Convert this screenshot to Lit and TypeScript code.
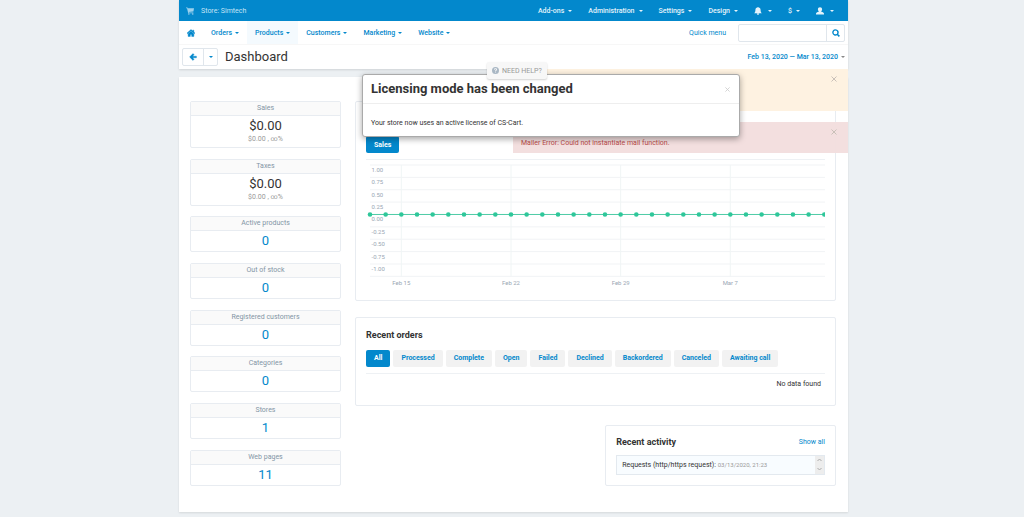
import { LitElement, html, css, svg } from "lit";
import { customElement } from "lit/decorators.js";
import { classMap } from "lit/directives/class-map.js";

interface Stat {
  title: string;
  value: string;
  note?: string;
}

const STATS: Stat[] = [
  { title: "Sales", value: "$0.00", note: "$0.00 , ∞%" },
  { title: "Taxes", value: "$0.00", note: "$0.00 , ∞%" },
  { title: "Active products", value: "0" },
  { title: "Out of stock", value: "0" },
  { title: "Registered customers", value: "0" },
  { title: "Categories", value: "0" },
  { title: "Stores", value: "1" },
  { title: "Web pages", value: "11" },
];

const ORDER_TABS = ["All", "Processed", "Complete", "Open", "Failed", "Declined", "Backordered", "Canceled", "Awaiting call"];
const AXIS = ["1.00", "0.75", "0.50", "0.25", "0.00", "-0.25", "-0.50", "-0.75", "-1.00"];
const WEEKS = ["Feb 15", "Feb 22", "Feb 29", "Mar 7"];

const icons = {
  cart: svg`<path d="M0 .8h2.600l.5 1.300H14l-1 5.700-8.300.9.2.9h8v1.200H3.800L1.800 2H0z"/><circle cx="5" cy="12.400" r="1.300"/><circle cx="11.800" cy="12.400" r="1.300"/>`,
  home: svg`<path d="M7 1 0 7.200l.9 1L7 3l6.100 5.200.9-1-2-1.800V2h-2v1.600zM7 4 2 8.200V13h3.800V9.500h2.400V13H12V8.200z" stroke="currentColor" stroke-width=".7"/>`,
  bell: svg`<path d="M7 0c.6 0 1 .4 1 .9 2.300.5 3.500 2 3.500 4.300 0 3 .8 4.300 2.300 5.800H.2C1.700 9.500 2.500 8.200 2.500 5.200 2.500 2.900 3.700 1.400 6 .9 6 .4 6.400 0 7 0zM5 11.500h4C9 12.800 8.200 13.700 7 13.700s-2-.9-2-2.200z"/>`,
  user: svg`<path d="M7 .3c2.300 0 3.700 1.600 3.700 3.800 0 1.500-.6 2.800-1.500 3.500v.6c2.600.7 4.800 1.500 4.800 3.400V13.300H0v-1.700c0-1.900 2.200-2.700 4.800-3.400v-.6C3.900 6.900 3.300 5.600 3.300 4.100 3.300 1.900 4.700.3 7 .3z"/>`,
  back: svg`<path d="M7 1 1 7l6 6 1.900-1.900L6.300 8.500H13v-3H6.300l2.600-2.600z" stroke="currentColor" stroke-width=".6"/>`,
  search: svg`<path fill-rule="evenodd" d="M6 .3a5.700 5.700 0 1 0 3 10.600l3 3 1.900-1.900-3-3A5.700 5.700 0 0 0 6 .3zM6 2.700a3.300 3.300 0 1 1 0 6.600 3.300 3.300 0 0 1 0-6.600z"/>`,
  help: svg`<path fill-rule="evenodd" d="M7 0a7 7 0 1 0 0 14A7 7 0 0 0 7 0zM4 5.200C4.100 3.500 5.300 2.500 7.100 2.500c1.700 0 3 1 3 2.500 0 1.200-.7 1.800-1.500 2.300-.5.300-.7.500-.7 1.100H6.200c0-1.500.5-2 1.300-2.500.5-.3.700-.5.700-.9s-.4-.8-1.100-.8-1.100.4-1.200 1.100zM6.100 9.300h1.900v1.900H6.100z"/>`,
};

const icon = (name: keyof typeof icons) =>
  html`<svg class="icon" viewBox="0 0 14 14" aria-hidden="true">${icons[name]}</svg>`;

@customElement("app-root")
export class AppRoot extends LitElement {
  static styles = css`
    :host {
      display: block;
      box-sizing: border-box;
      min-height: 100vh;
      padding: 0 0 6px 3px;
      background: #ecf0f3;
      color: #333;
      font: 7px/10px Roboto, "Liberation Sans", sans-serif;
    }
    *, *::before, *::after { box-sizing: border-box; }
    h1, h2, h3, p, dl, dd, dt, ul { margin: 0; padding: 0; list-style: none; }
    a { color: #0388cc; text-decoration: none; }
    button, input { font: inherit; color: inherit; margin: 0; padding: 0; border: 0; background: none; }
    .icon { width: 8px; height: 8px; fill: currentColor; display: block; flex: none; }
    .caret { border: 2px solid transparent; border-top-color: currentColor; border-bottom: 0; flex: none; }
    .frame { position: relative; max-width: 669px; margin: 0 auto; }

    .header { background: #fff; box-shadow: 0 1px 2px rgba(0, 0, 0, 0.12); }
    .top { display: flex; align-items: center; height: 21px; background: #0388cc; padding: 0 6px 0 7px; }
    .store { display: flex; align-items: center; gap: 7px; color: #c4e4f6; margin-right: auto; }
    .store .icon { opacity: 0.8; }
    .menu { display: flex; height: 100%; }
    .menu a { display: flex; align-items: center; gap: 4px; padding: 0 8px; height: 100%; font-weight: 500; }
    .menu .active { background: #f4fafe; }
    .top .menu a { color: #e4f3fb; }
    .top .menu .glyph { gap: 6px; }
    .nav { display: flex; align-items: center; height: 24px; padding-right: 3px; border-bottom: 1px solid #f7f7f7; }
    .nav .menu { margin-right: auto; }
    .nav .menu a { gap: 3px; }
    .search { display: flex; width: 107px; height: 18px; margin-left: 12px; border: 1px solid #e0e6ec; border-radius: 2px; }
    .search input { flex: 1; min-width: 0; padding: 0 4px; }
    .search button { width: 18px; display: grid; place-items: center; border-left: 1px solid #e0e6ec; color: #0388cc; }
    .title { display: flex; align-items: center; height: 24px; padding: 0 3px; }
    .split { display: flex; height: 18px; border: 1px solid #e0e6ec; border-radius: 2px; color: #0388cc; }
    .split button { width: 20px; display: grid; place-items: center; }
    .split button + button { width: 14px; border-left: 1px solid #e0e6ec; }
    .title h1 { margin: 0 auto 0 7px; font-size: 13px; line-height: 18px; font-weight: 400; }
    .range { display: flex; align-items: center; gap: 3px; font-weight: 500; }
    .range .caret { color: #888; }

    .main {
      display: grid;
      grid-template-columns: 151px minmax(0, 1fr);
      gap: 14px;
      margin-top: 8px;
      padding: 24px 12px 26px 11px;
      background: #fff;
      box-shadow: 0 1px 2px rgba(0, 0, 0, 0.1);
    }
    .stats { display: flex; flex-direction: column; justify-content: space-between; text-align: center; }
    .stat, .card { border: 1px solid #e8ecf1; border-radius: 2px; }
    .stat dt { height: 14px; line-height: 13px; background: #fafafa; border-bottom: 1px solid #e8ecf1; color: #8395a5; }
    .stat dd { font-size: 13px; line-height: 20px; color: #0388cc; }
    .stat .money { color: #333; }
    .stat .note { padding-bottom: 4px; font-size: 7px; line-height: 7px; color: #999; }
    .content { display: flex; flex-direction: column; }
    .card { padding: 11px 10px; }
    .card h3 { font-size: 9px; line-height: 10px; font-weight: 700; }
    .chart { padding-top: 34px; padding-bottom: 13px; margin-bottom: 16px; }
    .tabs { display: flex; flex-wrap: wrap; gap: 3px; padding-bottom: 6px; border-bottom: 1px solid #eef1f4; }
    .tabs button { height: 17px; padding: 0 8px; border-radius: 2px; background: #f2f2f2; color: #0388cc; font-weight: 700; }
    .tabs .on { background: #0388cc; color: #fff; }
    .plot { display: block; width: 100%; font-size: 6px; }
    .plot text { fill: #9aa7b4; }
    .orders { padding-top: 12px; margin-bottom: 19px; }
    .orders .tabs { margin-top: 10px; }
    .empty { padding: 5px 4px; text-align: right; }
    .activity { align-self: flex-end; width: 48%; padding-bottom: 10px; }
    .activity header { display: flex; justify-content: space-between; }
    .log { display: flex; align-items: stretch; height: 20px; margin-top: 8px; border: 1px solid #e3e9ef; background: #f8fcff; }
    .log p { flex: 1; padding-left: 5px; line-height: 18px; }
    .log time { color: #999; font-size: 6px; }
    .bar { width: 9px; background: #ededed; display: flex; flex-direction: column; justify-content: space-around; align-items: center; }
    .bar svg { width: 5px; height: 4px; fill: none; stroke: #aaa; }

    .notice { position: absolute; right: 0; width: 335px; height: 42px; background: rgba(254, 242, 224, 0.98); top: 69px; }
    .notice.error { top: 122px; height: 31px; padding: 16px 8px 0; background: rgba(242, 222, 222, 0.96); color: #b94a48; }
    .close { color: #c9c0b8; display: grid; place-items: center; width: 8px; height: 8px; }
    .close svg { width: 6px; height: 6px; stroke: currentColor; fill: none; }
    .notice .close { position: absolute; top: 6px; right: 10px; }
    .modal {
      position: absolute;
      top: 74px;
      left: 183px;
      width: 378px;
      background: #fff;
      border: 1px solid #aaa;
      border-radius: 3px;
      box-shadow: 0 2px 6px rgba(0, 0, 0, 0.35);
    }
    .modal header { display: flex; justify-content: space-between; align-items: center; padding: 5px 8px 5px; border-bottom: 1px solid #eee; }
    .modal h2 { font-size: 13px; line-height: 18px; font-weight: 700; }
    .modal .close { color: #ccc; }
    .modal .close svg { width: 5px; height: 5px; }
    .modal p { padding: 14px 8px 8px; }
    .help {
      position: absolute;
      top: 62px;
      left: 308px;
      display: flex;
      align-items: center;
      gap: 3px;
      height: 17px;
      padding: 0 5px;
      background: #f7f7f7;
      color: #999;
      border-radius: 2px;
      box-shadow: 0 1px 2px rgba(0, 0, 0, 0.18);
      white-space: nowrap;
    }
    .help .icon { width: 7px; height: 7px; color: #a9b7c4; }
  `;

  private link(label: unknown, cls = "", name = "") {
    return html`<a href="#" class=${cls} aria-label=${name || label}>${label}<span class="caret"></span></a>`;
  }

  private close() {
    return html`<button class="close" aria-label="Close"><svg viewBox="0 0 6 6"><path d="M.5.5l5 5M5.500.5l-5 5" /></svg></button>`;
  }

  private plot() {
    const step = 15.7;
    const rows = Array.from({ length: 10 }, (_, i) => 5 + i * 12.4);
    return html`<svg class="plot" viewBox="0 0 460 127" role="img" aria-label="Sales">
      ${rows.map((y) => svg`<line x1="4" x2="460" y1=${y} y2=${y} stroke="#f1f3f5" />`)}
      ${WEEKS.map((w, i) => {
        const x = 4 + step * (2 + i * 7);
        return svg`<line x1=${x} x2=${x} y1="5" y2="116.600" stroke="#f0f5f5" /><text x=${x} y="125" text-anchor="middle">${w}</text>`;
      })}
      ${AXIS.map((t, i) => svg`<text x="5.500" y=${rows[i] + 7}>${t}</text>`)}
      <line x1="4" x2="460" y1="54.600" y2="54.600" stroke="#4ecba6" />
      ${Array.from({ length: 30 }, (_, i) => svg`<circle cx=${4 + i * step} cy="54.600" r="2.300" fill="#2fc79a" />`)}
    </svg>`;
  }

  render() {
    return html`
      <div class="frame">
        <header class="header">
          <div class="top">
            <div class="store">${icon("cart")}<span>Store: Simtech</span></div>
            <nav class="menu">
              ${["Add-ons", "Administration", "Settings", "Design"].map((t) => this.link(t))}
              ${this.link(icon("bell"), "glyph", "Notifications")} ${this.link("$")} ${this.link(icon("user"), "glyph", "Account")}
            </nav>
          </div>
          <div class="nav">
            <nav class="menu">
              <a href="#" aria-label="Home">${icon("home")}</a>
              ${["Orders", "Products", "Customers", "Marketing", "Website"].map((t) => this.link(t, t === "Products" ? "active" : ""))}
            </nav>
            <a href="#">Quick menu</a>
            <form class="search">
              <input type="text" aria-label="Search" />
              <button type="button" aria-label="Find">${icon("search")}</button>
            </form>
          </div>
          <div class="title">
            <div class="split">
              <button aria-label="Back">${icon("back")}</button>
              <button aria-label="History"><span class="caret"></span></button>
            </div>
            <h1>Dashboard</h1>
            <a class="range" href="#">Feb 13, 2020 — Mar 13, 2020<span class="caret"></span></a>
          </div>
        </header>

        <main class="main">
          <div class="stats">
            ${STATS.map(
              (s) => html`<dl class="stat">
                <dt>${s.title}</dt>
                <dd class=${classMap({ money: !!s.note })}>${s.note ? s.value : html`<a href="#">${s.value}</a>`}</dd>
                ${s.note ? html`<dd class="note">${s.note}</dd>` : ""}
              </dl>`
            )}
          </div>
          <div class="content">
            <section class="card chart">
              <div class="tabs"><button class="on">Sales</button></div>
              ${this.plot()}
            </section>
            <section class="card orders">
              <h3>Recent orders</h3>
              <div class="tabs">
                ${ORDER_TABS.map((t, i) => html`<button class=${classMap({ on: i === 0 })}>${t}</button>`)}
              </div>
              <p class="empty">No data found</p>
            </section>
            <section class="card activity">
              <header><h3>Recent activity</h3><a href="#">Show all</a></header>
              <div class="log">
                <p>Requests (http/https request): <time>03/13/2020, 21:23</time></p>
                <div class="bar">
                  <svg viewBox="0 0 5 4"><path d="M.5 3 2.500 1l2 2" /></svg>
                  <svg viewBox="0 0 5 4"><path d="M.5 1l2 2 2-2" /></svg>
                </div>
              </div>
            </section>
          </div>
        </main>

        <div class="notice">${this.close()}</div>
        <div class="notice error" role="alert">${this.close()}Mailer Error: Could not instantiate mail function.</div>
        <section class="modal" role="dialog" aria-labelledby="modal-title">
          <header><h2 id="modal-title">Licensing mode has been changed</h2>${this.close()}</header>
          <p>Your store now uses an active license of CS-Cart.</p>
        </section>
        <a class="help" href="#">${icon("help")}NEED HELP?</a>
      </div>
    `;
  }
}
